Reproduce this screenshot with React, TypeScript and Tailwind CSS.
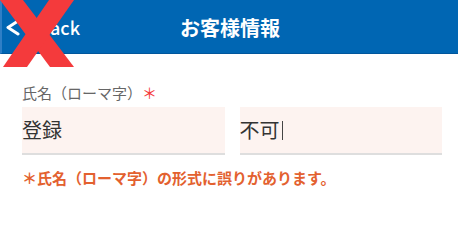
export default function App() {
  return (
    <div className="relative w-[458px] h-[210px] overflow-hidden bg-white font-['Noto_Sans_CJK_JP','Noto_Sans',sans-serif]">
      <header className="h-[54px] bg-[#0066b3] border-b border-[#00569c] border-l-2 border-l-[#2f7fc6] grid grid-cols-[1fr_auto_1fr] items-center">
        <div className="flex items-center pl-[3px] text-white">
          <svg width="16" height="18" viewBox="0 0 16 18" className="mt-[2px]">
            <polyline points="13,2 3,8.5 13,15" fill="none" stroke="white" strokeWidth="3" strokeLinecap="round" strokeLinejoin="round" />
          </svg>
          <span className="ml-[17px] text-[18px] leading-[24px] font-medium">Back</span>
        </div>
        <h1 className="text-[20px] leading-[26px] font-bold text-white pt-[3px]">お客様情報</h1>
        <div />
      </header>
      <svg className="absolute left-0 top-0" width="76" height="70" viewBox="0 0 76 70">
        <polygon points="0,0 23,0 74,67 50,67" fill="#f43a3c" />
        <polygon points="49,0 74,0 27,67 3,67" fill="#f43a3c" />
      </svg>
      <main className="pl-[22px] pr-[16px] pt-[29px]">
        <div className="text-[15px] leading-[20px] text-[#666]">
          氏名（ローマ字）<span className="text-[#f53b3b]">＊</span>
        </div>
        <div className="mt-[4px] flex gap-[15px]">
          <div className="flex-1 h-[48px] bg-[#fdf3f0] border-b-2 border-[#dedede] flex items-center text-[20px] text-[#333]">
            登録
          </div>
          <div className="flex-1 h-[48px] bg-[#fdf3f0] border-b-2 border-[#dedede] flex items-center text-[20px] text-[#333]">
            不可
            <span className="ml-[2px] w-px h-[19px] bg-[#444]" />
          </div>
        </div>
        <div className="mt-[13px] text-[15px] leading-[20px] font-bold text-[#e3612f]">
          ＊氏名（ローマ字）の形式に誤りがあります。
        </div>
      </main>
    </div>
  );
}
